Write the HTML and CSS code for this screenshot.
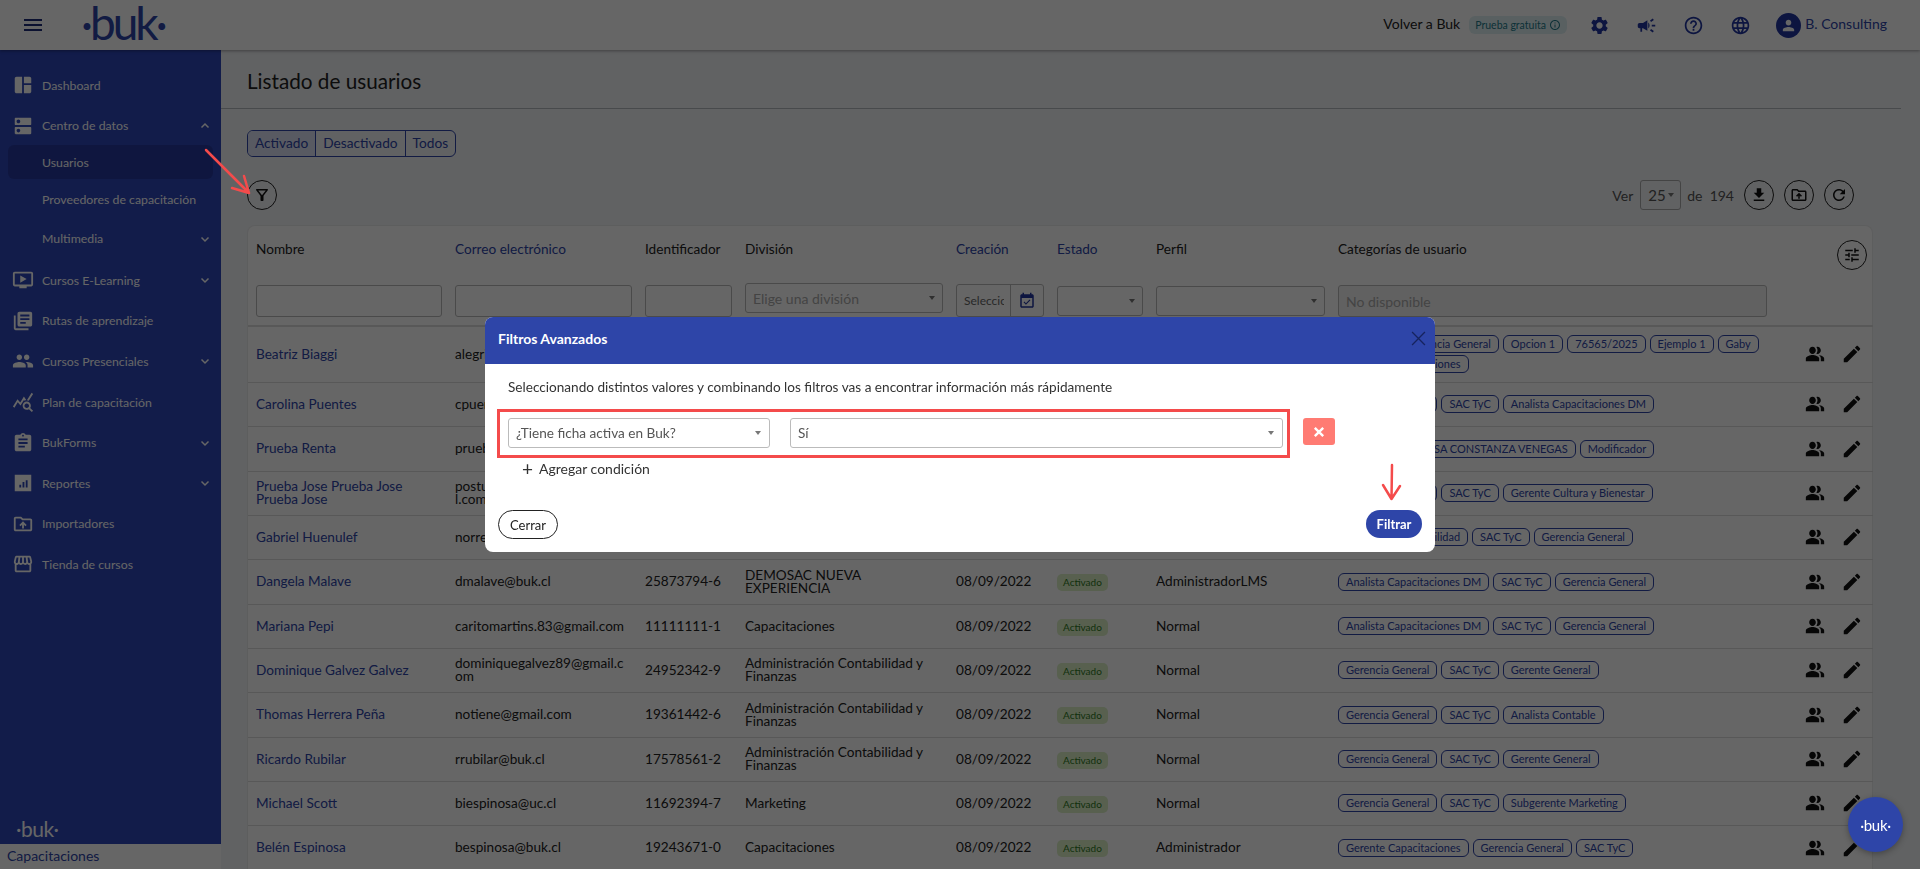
FILE: index.html
```html
<!DOCTYPE html>
<html lang="es">
<head>
    <meta charset="UTF-8">
    <title>Listado de usuarios - Buk</title>
    <link rel="stylesheet" href="styles.css">
</head>
<body>
    <svg class="sprite" xmlns="http://www.w3.org/2000/svg">
        <symbol id="i-menu" viewBox="0 0 24 24"><path d="M3 18h18v-2H3v2zm0-5h18v-2H3v2zm0-7v2h18V6H3z"/></symbol>
        <symbol id="i-dashboard" viewBox="0 0 24 24"><path d="M11 21H5c-1.1 0-2-.9-2-2V5c0-1.1.9-2 2-2h6v18zm2 0h6c1.1 0 2-.9 2-2v-7h-8v9zm8-11V5c0-1.1-.9-2-2-2h-6v7h8z"/></symbol>
        <symbol id="i-dns" viewBox="0 0 24 24"><path d="M20 13H4c-.55 0-1 .45-1 1v6c0 .55.45 1 1 1h16c.55 0 1-.45 1-1v-6c0-.55-.45-1-1-1zM7 19c-1.1 0-2-.9-2-2s.9-2 2-2 2 .9 2 2-.9 2-2 2zM20 3H4c-.55 0-1 .45-1 1v6c0 .55.45 1 1 1h16c.55 0 1-.45 1-1V4c0-.55-.45-1-1-1zM7 9c-1.1 0-2-.9-2-2s.9-2 2-2 2 .9 2 2-.9 2-2 2z"/></symbol>
        <symbol id="i-video" viewBox="0 0 24 24"><path d="M21 3H3c-1.11 0-2 .89-2 2v12c0 1.1.89 2 2 2h5v2h8v-2h5c1.1 0 1.99-.9 1.99-2L23 5c0-1.11-.9-2-2-2zm0 14H3V5h18v12zm-5-6l-7 4V7z"/></symbol>
        <symbol id="i-books" viewBox="0 0 24 24"><path d="M4 6H2v14c0 1.1.9 2 2 2h14v-2H4V6zm16-4H8c-1.1 0-2 .9-2 2v12c0 1.1.9 2 2 2h12c1.1 0 2-.9 2-2V4c0-1.1-.9-2-2-2zm-1 9H9V9h10v2zm-4 4H9v-2h6v2zm4-8H9V5h10v2z"/></symbol>
        <symbol id="i-people" viewBox="0 0 24 24"><path d="M16 11c1.66 0 2.99-1.34 2.99-3S17.66 5 16 5c-1.66 0-3 1.34-3 3s1.34 3 3 3zm-8 0c1.66 0 2.99-1.34 2.99-3S9.66 5 8 5C6.34 5 5 6.34 5 8s1.34 3 3 3zm0 2c-2.33 0-7 1.17-7 3.5V19h14v-2.5c0-2.33-4.67-3.5-7-3.5zm8 0c-.29 0-.62.02-.97.05 1.16.84 1.97 1.97 1.97 3.45V19h6v-2.5c0-2.33-4.67-3.5-7-3.5z"/></symbol>
        <symbol id="i-people-alt" viewBox="0 0 24 24" preserveAspectRatio="none"><path d="M16.67 13.13C18.04 14.06 19 15.32 19 17v3h4v-3c0-2.18-3.57-3.47-6.33-3.87zM15 12c2.21 0 4-1.79 4-4s-1.79-4-4-4c-.47 0-.91.1-1.33.24C14.5 5.27 15 6.58 15 8s-.5 2.73-1.33 3.76c.42.14.86.24 1.33.24zM9 12c2.21 0 4-1.79 4-4s-1.79-4-4-4-4 1.79-4 4 1.79 4 4 4zM9 13c-2.67 0-8 1.34-8 4v3h16v-3c0-2.66-5.33-4-8-4z"/></symbol>
        <symbol id="i-stats" viewBox="0 0 24 24"><path d="M19.88 18.47c.44-.7.7-1.51.7-2.39 0-2.49-2.01-4.5-4.5-4.5s-4.5 2.01-4.5 4.5 2.01 4.5 4.49 4.5c.88 0 1.7-.26 2.39-.7L21.58 23 23 21.58l-3.12-3.11zm-3.8.11c-1.38 0-2.5-1.12-2.5-2.5s1.12-2.5 2.5-2.5 2.5 1.12 2.5 2.5-1.12 2.5-2.5 2.5zm-.36-8.5c-.74.02-1.45.18-2.1.45l-.55-.83-3.8 6.18-3.01-3.52-3.63 5.81L1 17l5-8 3 3.5L13 6l2.72 4.08zm2.59.5c-.64-.28-1.33-.45-2.05-.49L21.38 2 23 3.18l-4.69 7.4z"/></symbol>
        <symbol id="i-assignment" viewBox="0 0 24 24"><path d="M19 3h-4.18C14.4 1.84 13.3 1 12 1c-1.3 0-2.4.84-2.82 2H5c-1.1 0-2 .9-2 2v14c0 1.1.9 2 2 2h14c1.1 0 2-.9 2-2V5c0-1.1-.9-2-2-2zm-7 0c.55 0 1 .45 1 1s-.45 1-1 1-1-.45-1-1 .45-1 1-1zm2 14H7v-2h7v2zm3-4H7v-2h10v2zm0-4H7V7h10v2z"/></symbol>
        <symbol id="i-assessment" viewBox="0 0 24 24"><path d="M3 3h18v18H3zM8 17h2v-3H8zm3.5 0h2v-6h-2zm3.5 0h2V9h-2z" fill-rule="evenodd"/></symbol>
        <symbol id="i-upload" viewBox="0 0 24 24"><path d="M20 6h-8l-2-2H4c-1.1 0-1.99.9-1.99 2L2 18c0 1.1.9 2 2 2h16c1.1 0 2-.9 2-2V8c0-1.1-.9-2-2-2zm0 12H4V6h5.17l2 2H20v10zM9.41 14.42L11 12.84V17h2v-4.16l1.59 1.59L16 13.01 12.01 9 8 13.01l1.41 1.41z"/></symbol>
        <symbol id="i-store" viewBox="0 0 24 24"><path d="M21.9 8.89l-1.05-4.37c-.22-.9-1-1.52-1.91-1.52H5.05c-.9 0-1.69.63-1.9 1.52L2.1 8.89c-.24 1.02-.02 2.06.62 2.88.08.11.19.19.28.29V19c0 1.1.9 2 2 2h14c1.1 0 2-.9 2-2v-6.94c.09-.09.2-.18.28-.28.64-.82.87-1.87.62-2.89zm-2.99-3.9l1.05 4.37c.1.42.01.84-.25 1.17-.14.18-.44.47-.94.47-.61 0-1.14-.49-1.21-1.14L16.98 5l1.93-.01zM13 5h1.96l.54 4.52c.05.39-.07.78-.33 1.07-.22.26-.54.41-.95.41-.67 0-1.22-.59-1.22-1.31V5zM8.49 9.52L9.04 5H11v4.69c0 .72-.55 1.31-1.29 1.31-.34 0-.65-.15-.89-.41-.25-.29-.37-.68-.33-1.07zm-4.45-.16L5.05 5h1.97l-.58 4.86c-.08.65-.6 1.14-1.21 1.14-.49 0-.8-.29-.93-.47-.27-.32-.36-.75-.26-1.17zM5 19v-6.03c.08.01.15.03.23.03.87 0 1.66-.36 2.24-.95.6.6 1.4.95 2.31.95.87 0 1.65-.36 2.23-.93.59.57 1.39.93 2.29.93.84 0 1.64-.35 2.24-.95.58.59 1.37.95 2.24.95.08 0 .15-.02.23-.03V19H5z"/></symbol>
        <symbol id="i-gear" viewBox="0 0 24 24"><path d="M19.14 12.94c.04-.3.06-.61.06-.94 0-.32-.02-.64-.07-.94l2.03-1.58c.18-.14.23-.41.12-.61l-1.92-3.32c-.12-.22-.37-.29-.59-.22l-2.39.96c-.5-.38-1.03-.7-1.62-.94l-.36-2.54c-.04-.24-.24-.41-.48-.41h-3.84c-.24 0-.43.17-.47.41l-.36 2.54c-.59.24-1.13.57-1.62.94l-2.39-.96c-.22-.08-.47 0-.59.22L2.74 8.87c-.12.21-.08.47.12.61l2.03 1.58c-.05.3-.09.63-.09.94s.02.64.07.94l-2.03 1.58c-.18.14-.23.41-.12.61l1.92 3.32c.12.22.37.29.59.22l2.39-.96c.5.38 1.03.7 1.62.94l.36 2.54c.05.24.24.41.48.41h3.84c.24 0 .44-.17.47-.41l.36-2.54c.59-.24 1.13-.56 1.62-.94l2.39.96c.22.08.47 0 .59-.22l1.92-3.32c.12-.22.07-.47-.12-.61l-2.01-1.58zM12 15.6c-1.98 0-3.6-1.62-3.6-3.6s1.62-3.6 3.6-3.6 3.6 1.62 3.6 3.6-1.62 3.6-3.6 3.6z"/></symbol>
        <symbol id="i-campaign" viewBox="0 0 24 24"><path d="M18 11v2h4v-2h-4zm-2 6.61c.96.71 2.21 1.65 3.2 2.39.4-.53.8-1.07 1.2-1.6-.99-.74-2.24-1.68-3.2-2.4-.4.54-.8 1.08-1.2 1.61zM20.4 5.6c-.4-.53-.8-1.07-1.2-1.6-.99.74-2.24 1.68-3.2 2.4.4.53.8 1.07 1.2 1.6.96-.72 2.21-1.65 3.2-2.4zM4 9c-1.1 0-2 .9-2 2v2c0 1.1.9 2 2 2h1v4h2v-4h1l5 3V6L8 9H4zm11.5 3c0-1.33-.58-2.53-1.5-3.35v6.69c.92-.81 1.5-2.01 1.5-3.34z"/></symbol>
        <symbol id="i-help" viewBox="0 0 24 24"><path d="M11 18h2v-2h-2v2zm1-16C6.48 2 2 6.48 2 12s4.48 10 10 10 10-4.48 10-10S17.52 2 12 2zm0 18c-4.41 0-8-3.59-8-8s3.59-8 8-8 8 3.59 8 8-3.59 8-8 8zm0-14c-2.21 0-4 1.79-4 4h2c0-1.1.9-2 2-2s2 .9 2 2c0 2-3 1.75-3 5h2c0-2.25 3-2.5 3-5 0-2.21-1.79-4-4-4z"/></symbol>
        <symbol id="i-globe" viewBox="0 0 24 24"><path d="M11.99 2C6.47 2 2 6.48 2 12s4.47 10 9.99 10C17.52 22 22 17.52 22 12S17.52 2 11.99 2zm6.93 6h-2.95c-.32-1.25-.78-2.45-1.38-3.56 1.84.63 3.37 1.91 4.33 3.56zM12 4.04c.83 1.2 1.48 2.53 1.91 3.96h-3.82c.43-1.43 1.08-2.76 1.91-3.96zM4.26 14C4.1 13.36 4 12.69 4 12s.1-1.36.26-2h3.38c-.08.66-.14 1.32-.14 2 0 .68.06 1.34.14 2H4.26zm.82 2h2.95c.32 1.25.78 2.45 1.38 3.56-1.84-.63-3.37-1.9-4.33-3.56zm2.95-8H5.08c.96-1.66 2.49-2.93 4.33-3.56C8.81 5.55 8.35 6.75 8.03 8zM12 19.96c-.83-1.2-1.48-2.53-1.91-3.96h3.82c-.43 1.43-1.08 2.76-1.91 3.96zM14.34 14H9.66c-.09-.66-.16-1.32-.16-2 0-.68.07-1.35.16-2h4.68c.09.65.16 1.32.16 2 0 .68-.07 1.34-.16 2zm.25 5.56c.6-1.11 1.06-2.31 1.38-3.56h2.95c-.96 1.65-2.49 2.93-4.33 3.56zM16.36 14c.08-.66.14-1.32.14-2 0-.68-.06-1.34-.14-2h3.38c.16.64.26 1.31.26 2s-.1 1.36-.26 2h-3.38z"/></symbol>
        <symbol id="i-person" viewBox="0 0 24 24"><path d="M12 12c2.21 0 4-1.79 4-4s-1.79-4-4-4-4 1.79-4 4 1.79 4 4 4zm0 2c-2.67 0-8 1.34-8 4v2h16v-2c0-2.66-5.33-4-8-4z"/></symbol>
        <symbol id="i-filter" viewBox="0 0 24 24"><path d="M7 6h10l-5.01 6.3L7 6zm-2.75-.39C6.27 8.2 10 13 10 13v6c0 .55.45 1 1 1h2c.55 0 1-.45 1-1v-6s3.72-4.8 5.74-7.39C20.25 4.95 19.78 4 18.95 4H5.04c-.83 0-1.3.95-.79 1.61z"/></symbol>
        <symbol id="i-download" viewBox="0 0 24 24"><path d="M19 9h-4V3H9v6H5l7 7 7-7zM5 18v2h14v-2H5z"/></symbol>
        <symbol id="i-refresh" viewBox="0 0 24 24"><path d="M17.65 6.35C16.2 4.9 14.21 4 12 4c-4.42 0-7.99 3.58-7.99 8s3.57 8 7.99 8c3.73 0 6.84-2.55 7.73-6h-2.08c-.82 2.33-3.04 4-5.65 4-3.31 0-6-2.69-6-6s2.69-6 6-6c1.66 0 3.14.69 4.22 1.78L13 11h7V4l-2.35 2.35z"/></symbol>
        <symbol id="i-tune" viewBox="0 0 24 24"><path d="M3 17v2h6v-2H3zM3 5v2h10V5H3zm10 16v-2h8v-2h-8v-2h-2v6h2zM7 9v2H3v2h4v2h2V9H7zm14 4v-2H11v2h10zm-6-4h2V7h4V5h-4V3h-2v6z"/></symbol>
        <symbol id="i-edit" viewBox="0 0 24 24"><path d="M3 17.25V21h3.75L17.81 9.94l-3.75-3.75L3 17.25zM20.71 7.04c.39-.39.39-1.02 0-1.41l-2.34-2.34c-.39-.39-1.02-.39-1.41 0l-1.83 1.83 3.75 3.75 1.83-1.83z"/></symbol>
        <symbol id="i-event" viewBox="0 0 24 24"><path d="M19 3h-1V1h-2v2H8V1H6v2H5c-1.11 0-1.99.9-1.99 2L3 19c0 1.1.89 2 2 2h14c1.1 0 2-.9 2-2V5c0-1.1-.9-2-2-2zm0 16H5V8h14v11zM16.53 11.06L15.47 10l-4.88 4.88-2.12-2.12-1.06 1.06L10.59 17l5.94-5.94z"/></symbol>
        <symbol id="i-info" viewBox="0 0 24 24"><path d="M11 7h2v2h-2zm0 4h2v6h-2zm1-9C6.48 2 2 6.48 2 12s4.48 10 10 10 10-4.48 10-10S17.52 2 12 2zm0 18c-4.41 0-8-3.59-8-8s3.59-8 8-8 8 3.59 8 8-3.59 8-8 8z"/></symbol>
        <symbol id="i-down" viewBox="0 0 12 12"><path d="M2.5 4.5 6 8l3.5-3.5" fill="none" stroke="currentColor" stroke-width="1.5"/></symbol>
        <symbol id="i-up" viewBox="0 0 12 12"><path d="M2.5 7.5 6 4l3.5 3.5" fill="none" stroke="currentColor" stroke-width="1.5"/></symbol>
    </svg>

    <!-- Top bar -->
    <header class="topbar">
        <svg class="menu-icon"><use href="#i-menu"/></svg>
        <span class="logo">·buk·</span>
        <div class="topbar-right">
            <span class="back-link">Volver a Buk</span>
            <span class="trial-badge">Prueba gratuita <svg class="trial-info"><use href="#i-info"/></svg></span>
            <svg class="top-icon"><use href="#i-gear"/></svg>
            <svg class="top-icon"><use href="#i-campaign"/></svg>
            <svg class="top-icon"><use href="#i-help"/></svg>
            <svg class="top-icon"><use href="#i-globe"/></svg>
            <span class="avatar"><svg><use href="#i-person"/></svg></span>
            <span class="company">B. Consulting</span>
        </div>
    </header>

    <div class="layout">
        <!-- Sidebar -->
        <aside class="sidebar-wrap">
            <nav class="sidebar">
                <a class="nav-item"><svg class="nav-icon"><use href="#i-dashboard"/></svg>Dashboard</a>
                <a class="nav-item"><svg class="nav-icon"><use href="#i-dns"/></svg>Centro de datos<svg class="chevron"><use href="#i-up"/></svg></a>
                <a class="nav-sub active">Usuarios</a>
                <a class="nav-sub">Proveedores de capacitación</a>
                <a class="nav-sub">Multimedia<svg class="chevron"><use href="#i-down"/></svg></a>
                <a class="nav-item"><svg class="nav-icon"><use href="#i-video"/></svg>Cursos E-Learning<svg class="chevron"><use href="#i-down"/></svg></a>
                <a class="nav-item"><svg class="nav-icon"><use href="#i-books"/></svg>Rutas de aprendizaje</a>
                <a class="nav-item"><svg class="nav-icon"><use href="#i-people"/></svg>Cursos Presenciales<svg class="chevron"><use href="#i-down"/></svg></a>
                <a class="nav-item"><svg class="nav-icon"><use href="#i-stats"/></svg>Plan de capacitación</a>
                <a class="nav-item"><svg class="nav-icon"><use href="#i-assignment"/></svg>BukForms<svg class="chevron"><use href="#i-down"/></svg></a>
                <a class="nav-item"><svg class="nav-icon"><use href="#i-assessment"/></svg>Reportes<svg class="chevron"><use href="#i-down"/></svg></a>
                <a class="nav-item"><svg class="nav-icon"><use href="#i-upload"/></svg>Importadores</a>
                <a class="nav-item"><svg class="nav-icon"><use href="#i-store"/></svg>Tienda de cursos</a>
                <span class="sidebar-logo">·buk·</span>
            </nav>
            <div class="product-name">Capacitaciones</div>
        </aside>

        <!-- Main content -->
        <main class="content">
            <h1 class="page-title">Listado de usuarios</h1>
            <div class="tabs">
                <span class="tab selected">Activado</span>
                <span class="tab">Desactivado</span>
                <span class="tab">Todos</span>
            </div>
            <div class="toolbar">
                <button class="circle-btn"><svg><use href="#i-filter"/></svg></button>
                <div class="pager">
                    <span>Ver</span>
                    <span class="page-select">25 <i class="caret"></i></span>
                    <span>de&nbsp; 194</span>
                    <button class="circle-btn"><svg><use href="#i-download"/></svg></button>
                    <button class="circle-btn"><svg><use href="#i-upload"/></svg></button>
                    <button class="circle-btn"><svg><use href="#i-refresh"/></svg></button>
                </div>
            </div>

            <div class="card">
                <table class="users">
                    <colgroup>
                        <col class="c-name"><col class="c-mail"><col class="c-id"><col class="c-div"><col class="c-date"><col class="c-state"><col class="c-role"><col class="c-cats"><col class="c-act">
                    </colgroup>
                    <thead>
                        <tr class="head-titles">
                            <th>Nombre</th>
                            <th class="sortable">Correo electrónico</th>
                            <th>Identificador</th>
                            <th>División</th>
                            <th class="sortable">Creación</th>
                            <th class="sortable">Estado</th>
                            <th>Perfil</th>
                            <th>Categorías de usuario</th>
                            <th class="tune-cell"><button class="circle-btn"><svg><use href="#i-tune"/></svg></button></th>
                        </tr>
                        <tr class="head-filters">
                            <th><div class="field"></div></th>
                            <th><div class="field"></div></th>
                            <th><div class="field"></div></th>
                            <th><div class="field muted raised">Elige una división<i class="caret"></i></div></th>
                            <th><div class="date-field"><span class="date-text">Selecciona</span><span class="date-btn"><svg><use href="#i-event"/></svg></span></div></th>
                            <th><div class="field slim"><i class="caret"></i></div></th>
                            <th><div class="field slim"><i class="caret"></i></div></th>
                            <th class="cats-filter"><div class="field muted filled">No disponible</div></th>
                            <th></th>
                        </tr>
                    </thead>
                    <tbody>
                        <tr class="first-row">
                            <td class="name">Beatriz Biaggi</td><td class="mail">alegria.biaggi@buk.cl</td><td>20154873-5</td><td>Gerencia General</td><td>08/09/2022</td><td><span class="status">Activado</span></td><td>Normal</td>
                            <td><div class="chips"><span class="chip">SAC TyC</span><span class="chip">Gerencia General</span><span class="chip">Opcion 1</span><span class="chip">76565/2025</span><span class="chip">Ejemplo 1</span><span class="chip">Gaby</span><span class="chip">Gerente Capacitaciones</span></div></td>
                            <td><div class="actions"><svg class="act-people"><use href="#i-people-alt"/></svg><svg><use href="#i-edit"/></svg></div></td>
                        </tr>
                        <tr>
                            <td class="name">Carolina Puentes</td><td class="mail">cpuentes@buk.cl</td><td>18230945-1</td><td>Capacitaciones</td><td>08/09/2022</td><td><span class="status">Activado</span></td><td>Normal</td>
                            <td><div class="chips"><span class="chip">Gerencia General</span><span class="chip">SAC TyC</span><span class="chip">Analista Capacitaciones DM</span></div></td>
                            <td><div class="actions"><svg class="act-people"><use href="#i-people-alt"/></svg><svg><use href="#i-edit"/></svg></div></td>
                        </tr>
                        <tr>
                            <td class="name">Prueba Renta</td><td class="mail">prueba@buk.cl</td><td>12345678-5</td><td>Capacitaciones</td><td>08/09/2022</td><td><span class="status">Activado</span></td><td>Normal</td>
                            <td><div class="chips"><span class="chip">GERENTE EMPRESA CONSTANZA VENEGAS</span><span class="chip">Modificador</span></div></td>
                            <td><div class="actions"><svg class="act-people"><use href="#i-people-alt"/></svg><svg><use href="#i-edit"/></svg></div></td>
                        </tr>
                        <tr>
                            <td class="name">Prueba Jose Prueba Jose Prueba Jose</td><td class="mail">postulantepruebajose@gmai<wbr>l.com</td><td>16543210-8</td><td>Capacitaciones</td><td>08/09/2022</td><td><span class="status">Activado</span></td><td>Normal</td>
                            <td><div class="chips"><span class="chip">Gerencia General</span><span class="chip">SAC TyC</span><span class="chip">Gerente Cultura y Bienestar</span></div></td>
                            <td><div class="actions"><svg class="act-people"><use href="#i-people-alt"/></svg><svg><use href="#i-edit"/></svg></div></td>
                        </tr>
                        <tr>
                            <td class="name">Gabriel Huenulef</td><td class="mail">norreply@buk.cl</td><td>17654321-4</td><td>Contabilidad</td><td>08/09/2022</td><td><span class="status">Activado</span></td><td>Normal</td>
                            <td><div class="chips"><span class="chip">Encargado Contabilidad</span><span class="chip">SAC TyC</span><span class="chip">Gerencia General</span></div></td>
                            <td><div class="actions"><svg class="act-people"><use href="#i-people-alt"/></svg><svg><use href="#i-edit"/></svg></div></td>
                        </tr>
                        <tr>
                            <td class="name">Dangela Malave</td><td class="mail">dmalave@buk.cl</td><td>25873794-6</td><td>DEMOSAC NUEVA EXPERIENCIA</td><td>08/09/2022</td><td><span class="status">Activado</span></td><td>AdministradorLMS</td>
                            <td><div class="chips"><span class="chip">Analista Capacitaciones DM</span><span class="chip">SAC TyC</span><span class="chip">Gerencia General</span></div></td>
                            <td><div class="actions"><svg class="act-people"><use href="#i-people-alt"/></svg><svg><use href="#i-edit"/></svg></div></td>
                        </tr>
                        <tr>
                            <td class="name">Mariana Pepi</td><td class="mail">caritomartins.83@gmail.com</td><td>11111111-1</td><td>Capacitaciones</td><td>08/09/2022</td><td><span class="status">Activado</span></td><td>Normal</td>
                            <td><div class="chips"><span class="chip">Analista Capacitaciones DM</span><span class="chip">SAC TyC</span><span class="chip">Gerencia General</span></div></td>
                            <td><div class="actions"><svg class="act-people"><use href="#i-people-alt"/></svg><svg><use href="#i-edit"/></svg></div></td>
                        </tr>
                        <tr>
                            <td class="name">Dominique Galvez Galvez</td><td class="mail">dominiquegalvez89@gmail.c<wbr>om</td><td>24952342-9</td><td>Administración Contabilidad y Finanzas</td><td>08/09/2022</td><td><span class="status">Activado</span></td><td>Normal</td>
                            <td><div class="chips"><span class="chip">Gerencia General</span><span class="chip">SAC TyC</span><span class="chip">Gerente General</span></div></td>
                            <td><div class="actions"><svg class="act-people"><use href="#i-people-alt"/></svg><svg><use href="#i-edit"/></svg></div></td>
                        </tr>
                        <tr>
                            <td class="name">Thomas Herrera Peña</td><td class="mail">notiene@gmail.com</td><td>19361442-6</td><td>Administración Contabilidad y Finanzas</td><td>08/09/2022</td><td><span class="status">Activado</span></td><td>Normal</td>
                            <td><div class="chips"><span class="chip">Gerencia General</span><span class="chip">SAC TyC</span><span class="chip">Analista Contable</span></div></td>
                            <td><div class="actions"><svg class="act-people"><use href="#i-people-alt"/></svg><svg><use href="#i-edit"/></svg></div></td>
                        </tr>
                        <tr>
                            <td class="name">Ricardo Rubilar</td><td class="mail">rrubilar@buk.cl</td><td>17578561-2</td><td>Administración Contabilidad y Finanzas</td><td>08/09/2022</td><td><span class="status">Activado</span></td><td>Normal</td>
                            <td><div class="chips"><span class="chip">Gerencia General</span><span class="chip">SAC TyC</span><span class="chip">Gerente General</span></div></td>
                            <td><div class="actions"><svg class="act-people"><use href="#i-people-alt"/></svg><svg><use href="#i-edit"/></svg></div></td>
                        </tr>
                        <tr>
                            <td class="name">Michael Scott</td><td class="mail">biespinosa@uc.cl</td><td>11692394-7</td><td>Marketing</td><td>08/09/2022</td><td><span class="status">Activado</span></td><td>Normal</td>
                            <td><div class="chips"><span class="chip">Gerencia General</span><span class="chip">SAC TyC</span><span class="chip">Subgerente Marketing</span></div></td>
                            <td><div class="actions"><svg class="act-people"><use href="#i-people-alt"/></svg><svg><use href="#i-edit"/></svg></div></td>
                        </tr>
                        <tr>
                            <td class="name">Belén Espinosa</td><td class="mail">bespinosa@buk.cl</td><td>19243671-0</td><td>Capacitaciones</td><td>08/09/2022</td><td><span class="status">Activado</span></td><td>Administrador</td>
                            <td><div class="chips"><span class="chip">Gerente Capacitaciones</span><span class="chip">Gerencia General</span><span class="chip">SAC TyC</span></div></td>
                            <td><div class="actions"><svg class="act-people"><use href="#i-people-alt"/></svg><svg><use href="#i-edit"/></svg></div></td>
                        </tr>
                    </tbody>
                </table>
            </div>
        </main>
    </div>

    <!-- Dark backdrop behind the dialog -->
    <div class="backdrop"></div>

    <!-- Filter dialog -->
    <section class="modal">
        <div class="modal-header">
            <h2>Filtros Avanzados</h2>
            <svg class="modal-close" viewBox="0 0 14 14"><path d="M1 1l12 12M13 1L1 13"/></svg>
        </div>
        <div class="modal-body">
            <p class="modal-text">Seleccionando distintos valores y combinando los filtros vas a encontrar información más rápidamente</p>
            <div class="condition">
                <div class="condition-box">
                    <div class="select-box first">¿Tiene ficha activa en Buk?<i class="caret"></i></div>
                    <div class="select-box second">Sí<i class="caret"></i></div>
                </div>
                <button class="remove-btn"><svg viewBox="0 0 10 10"><path d="M1.5 1.5l7 7M8.5 1.5l-7 7"/></svg></button>
            </div>
            <div class="add-condition"><span class="plus">+</span>Agregar condición</div>
        </div>
        <div class="modal-footer">
            <button class="btn-close">Cerrar</button>
            <button class="btn-filter">Filtrar</button>
        </div>
    </section>

    <!-- Hand drawn arrows from the screenshot -->
    <svg class="arrow arrow-filter" viewBox="0 0 50 50"><path d="M3 3l43 43M41 29l5 17M29 41l17 5"/></svg>
    <svg class="arrow arrow-submit" viewBox="0 0 24 40"><path d="M12 2l-.5 34M3 22l8.5 14L20 23"/></svg>

    <button class="fab">·buk·</button>
</body>
</html>
```

FILE: styles.css
```css
/* General Styles */
* {
    box-sizing: border-box;
}

html,
body {
    height: 869px;
    overflow: hidden;
}

body {
    margin: 0;
    font-family: Lato, "Noto Sans", sans-serif;
    font-size: 14px;
    color: #222;
    background: #f2f4f7;
}

.sprite {
    display: none;
}

svg {
    fill: currentColor;
}

button {
    font-family: inherit;
    padding: 0;
}

.caret {
    width: 0;
    height: 0;
    margin-left: auto;
    border-left: 3.5px solid transparent;
    border-right: 3.5px solid transparent;
    border-top: 4px solid #777;
}

/* Top bar */
.topbar {
    position: relative;
    z-index: 2;
    height: 50px;
    display: flex;
    align-items: center;
    background: #fff;
    box-shadow: 0 1px 3px rgba(0, 0, 0, 0.35);
}

.menu-icon {
    width: 24px;
    height: 24px;
    margin-left: 21px;
    color: #1d2c78;
}

.logo {
    margin-left: 36px;
    margin-top: -4px;
    font-size: 46px;
    line-height: 40px;
    letter-spacing: -3px;
    color: #2d44a8;
}

.topbar-right {
    display: flex;
    align-items: center;
    margin-left: auto;
    padding-right: 33px;
}

.back-link {
    margin-right: 9px;
    margin-top: -4px;
}

.trial-badge {
    display: flex;
    align-items: center;
    gap: 3px;
    height: 18px;
    width: 98px;
    padding-left: 6px;
    border-radius: 6px;
    font-size: 10.5px;
    color: #237a8a;
    background: #dff0f3;
}

.trial-info {
    width: 12px;
    height: 12px;
}

.top-icon {
    width: 21px;
    height: 21px;
    margin-left: 26px;
    color: #2136a0;
}

.top-icon:first-of-type {
    margin-left: 22px;
}

.avatar {
    display: flex;
    align-items: center;
    justify-content: center;
    width: 25px;
    height: 25px;
    margin-left: 25px;
    border-radius: 50%;
    background: #2136a0;
    color: #fff;
}

.avatar svg {
    width: 17px;
    height: 17px;
}

.company {
    margin-left: 4px;
    margin-top: -4px;
    color: #2d44a8;
}

/* Sidebar */
.layout {
    display: flex;
    height: 819px;
}

.sidebar-wrap {
    flex: 0 0 221px;
    display: flex;
    flex-direction: column;
}

.sidebar {
    flex: 1;
    display: flex;
    flex-direction: column;
    padding-top: 15px;
    background: #2d46b9;
    color: #fff;
    font-size: 12.3px;
}

.nav-item,
.nav-sub {
    display: flex;
    align-items: center;
    height: 40.6px;
    padding-left: 42px;
    padding-right: 10px;
    flex: none;
}

.nav-sub {
    height: 39px;
}

.nav-sub.active {
    height: 34px;
    margin: -1.2px 8px 1px;
    padding-left: 34px;
    border-radius: 6px;
    background: #27399e;
}

.nav-sub + .nav-item {
    margin-top: 2px;
}

.nav-icon {
    width: 22px;
    height: 22px;
    margin-left: -30px;
    margin-right: 8px;
    flex: none;
}

.chevron {
    width: 12px;
    height: 12px;
    margin-left: auto;
}

.sidebar-logo {
    margin-top: auto;
    margin-left: 16px;
    margin-bottom: 1px;
    font-size: 21px;
    line-height: 28px;
    letter-spacing: -0.5px;
}

.product-name {
    height: 25px;
    padding-left: 7px;
    line-height: 24px;
    font-size: 14px;
    color: #2d44a8;
    background: #fff;
}

/* Main content */
.content {
    flex: 1;
    min-width: 0;
    padding: 0 19px 0 26px;
}

.page-title {
    margin: 0 0 21px -26px;
    padding-left: 26px;
    height: 59px;
    line-height: 63px;
    font-size: 20.7px;
    font-weight: 400;
    border-bottom: 1px solid #b5b8bd;
}

.tabs {
    display: inline-flex;
    height: 27px;
    border: 1px solid #2d44a8;
    border-radius: 6px;
    overflow: hidden;
    font-size: 13.7px;
    color: #2d44a8;
}

.tab {
    padding: 0 7px;
    line-height: 24px;
    border-left: 1px solid #2d44a8;
}

.tab:first-child {
    border-left: none;
}

.tab.selected {
    background: #dce2f4;
}

.toolbar {
    display: flex;
    justify-content: space-between;
    margin-top: 23px;
    margin-right: 47px;
    height: 30px;
}

.circle-btn {
    display: flex;
    align-items: center;
    justify-content: center;
    width: 30px;
    height: 30px;
    border: 1px solid #222;
    border-radius: 50%;
    background: transparent;
    color: #111;
}

.circle-btn svg {
    width: 18px;
    height: 18px;
}

.pager {
    display: flex;
    align-items: center;
    gap: 7px;
    color: #555;
}

.pager .circle-btn {
    margin-left: 3px;
}

.page-select {
    display: flex;
    align-items: center;
    height: 30px;
    width: 41px;
    margin-right: -1px;
    padding: 0 6px 0 7px;
    border: 1px solid #aaa;
    border-radius: 3px;
    font-size: 15px;
}

/* Users table */
.card {
    margin-top: 15px;
    margin-right: 28px;
    background: #fff;
    border: 1px solid #e9eaec;
    border-bottom: none;
    border-radius: 8px 8px 0 0;
}

.users {
    width: 1625px;
    table-layout: fixed;
    border-collapse: collapse;
    font-size: 13.6px;
    color: #222;
}

.c-name { width: 199px; }
.c-mail { width: 190px; }
.c-id { width: 100px; }
.c-div { width: 211px; }
.c-date { width: 101px; }
.c-state { width: 99px; }
.c-role { width: 182px; }
.c-cats { width: 450px; }
.c-act { width: 93px; }

.users th {
    padding: 0 5px 0 8px;
    text-align: left;
    font-weight: 400;
}

.users td {
    padding: 0 6px 0 8px;
    line-height: 13px;
    border-top: 1px solid #ddd;
    overflow-wrap: anywhere;
}

.head-titles {
    height: 50px;
}

.head-titles th {
    padding-bottom: 4px;
}

.head-filters {
    height: 50px;
    border-bottom: 2px solid #ddd;
    vertical-align: top;
}

.users .head-filters th {
    padding-top: 9px;
}

.users .head-filters .cats-filter {
    padding-right: 13px;
}

.sortable {
    color: #2d44a8;
}

.users .tune-cell {
    padding: 14px 6px 0 0;
    vertical-align: top;
    text-align: right;
}

.tune-cell .circle-btn {
    margin-left: auto;
}

.field {
    display: flex;
    align-items: center;
    height: 32px;
    padding: 0 7px;
    border: 1px solid #b9b9b9;
    border-radius: 3px;
    background: #fff;
}

.field.muted {
    color: #aaa;
    font-size: 14px;
}

.field.raised {
    height: 30px;
    margin-top: -2px;
}

.field.slim {
    height: 30px;
    margin-top: 1px;
}

.field.filled {
    background: #f2f2f2;
}

.date-field {
    display: flex;
    height: 33px;
    margin-top: -1px;
    border: 1px solid #b9b9b9;
    border-radius: 3px;
    overflow: hidden;
    font-size: 12px;
}

.date-text {
    flex: 1;
    overflow: hidden;
    margin: 0 6px 0 7px;
    line-height: 31px;
    white-space: nowrap;
    color: #666;
}

.date-btn {
    flex: none;
    display: flex;
    align-items: center;
    justify-content: center;
    width: 33px;
    border-left: 1px solid #b9b9b9;
    color: #2136a0;
}

.date-btn svg {
    width: 18px;
    height: 18px;
}

.users tbody tr {
    height: 44px;
}

.users tbody tr:nth-child(3n) {
    height: 45px;
}

.users tbody .first-row {
    height: 56px;
}

.name {
    color: #2d44a8;
}

.mail {
    line-height: 14px;
}

.status {
    display: inline-block;
    height: 17px;
    margin-top: 2px;
    padding: 0 6px;
    line-height: 17px;
    font-size: 10px;
    color: #2f7a1d;
    background: #dbefc6;
    border-radius: 5px;
    vertical-align: middle;
}

.chips {
    display: flex;
    flex-wrap: wrap;
    gap: 2px 4px;
}

.chip {
    height: 18px;
    padding: 0 7px;
    line-height: 16px;
    font-size: 11px;
    color: #2d44a8;
    border: 1px solid #2d44a8;
    border-radius: 6px;
    white-space: nowrap;
}

.actions {
    display: flex;
    align-items: center;
    gap: 16px;
    justify-content: flex-end;
    padding-right: 4px;
    color: #111;
}

.actions svg {
    width: 22px;
    height: 22px;
}

.actions .act-people {
    width: 20px;
}

/* Backdrop and dialog */
.backdrop {
    position: fixed;
    inset: 0;
    z-index: 5;
    background: rgba(0, 0, 0, 0.6);
}

.modal {
    position: fixed;
    z-index: 6;
    left: 485px;
    top: 317px;
    width: 950px;
    height: 235px;
    border-radius: 8px;
    overflow: hidden;
    background: #fff;
    display: flex;
    flex-direction: column;
}

.modal-header {
    display: flex;
    align-items: center;
    justify-content: space-between;
    height: 47px;
    padding: 0 9px 5px 13px;
    background: #2e45a8;
}

.modal-header h2 {
    margin: 0;
    font-size: 14px;
    font-weight: 700;
    color: #fff;
}

.modal-close {
    width: 15px;
    height: 15px;
    fill: none;
    stroke: #16235e;
    stroke-width: 1.2;
}

.modal-body {
    flex: 1;
    padding: 14px 12px 0 12px;
}

.modal-text {
    margin: 0 0 13px 11px;
    font-size: 13.6px;
    line-height: 18px;
    color: #333;
}

.condition {
    display: flex;
    align-items: flex-start;
    gap: 13px;
}

.condition-box {
    display: flex;
    gap: 20px;
    width: 793px;
    height: 49px;
    padding: 6px 4px 0 8px;
    border: 3px solid #f44b4b;
}

.select-box {
    display: flex;
    align-items: center;
    height: 30px;
    padding: 0 8px 0 7px;
    border: 1px solid #bbb;
    border-radius: 3px;
    font-size: 13.6px;
    color: #555;
}

.select-box.first {
    flex: 0 0 262px;
}

.select-box.second {
    flex: 1;
}

.remove-btn {
    width: 32px;
    height: 27px;
    margin-top: 9px;
    border: none;
    border-radius: 3px;
    background: #ff7b73;
}

.remove-btn svg {
    display: block;
    width: 12px;
    height: 12px;
    margin: auto;
    fill: none;
    stroke: #fff;
    stroke-width: 2;
}

.add-condition {
    display: flex;
    align-items: center;
    margin: 1px 0 0 25px;
    height: 18px;
    font-size: 14px;
    color: #333;
}

.plus {
    width: 17px;
    font-size: 19px;
}

.modal-footer {
    display: flex;
    align-items: flex-start;
    justify-content: space-between;
    height: 42px;
    padding: 0 13px;
}

.btn-close {
    width: 60px;
    height: 29px;
    border: 1px solid #222;
    border-radius: 15px;
    background: #fff;
    font-size: 13px;
    color: #222;
}

.btn-filter {
    width: 56px;
    height: 28px;
    border: none;
    border-radius: 14px;
    background: #2e45a8;
    font-size: 13px;
    font-weight: 700;
    color: #fff;
}

/* Arrows and floating button */
.arrow {
    position: fixed;
    z-index: 7;
    fill: none;
    stroke: #f44b4b;
    stroke-width: 2.5;
    stroke-linecap: round;
    stroke-linejoin: round;
}

.arrow-filter {
    left: 203px;
    top: 147px;
    width: 50px;
    height: 50px;
}

.arrow-submit {
    left: 1380px;
    top: 463px;
    width: 24px;
    height: 40px;
}

.fab {
    position: fixed;
    z-index: 7;
    left: 1848px;
    top: 797px;
    width: 55px;
    height: 55px;
    border: none;
    border-radius: 50%;
    background: #2e45a8;
    font-size: 15px;
    letter-spacing: -0.3px;
    color: #fff;
    box-shadow: 0 2px 6px rgba(0, 0, 0, 0.3);
}
```
